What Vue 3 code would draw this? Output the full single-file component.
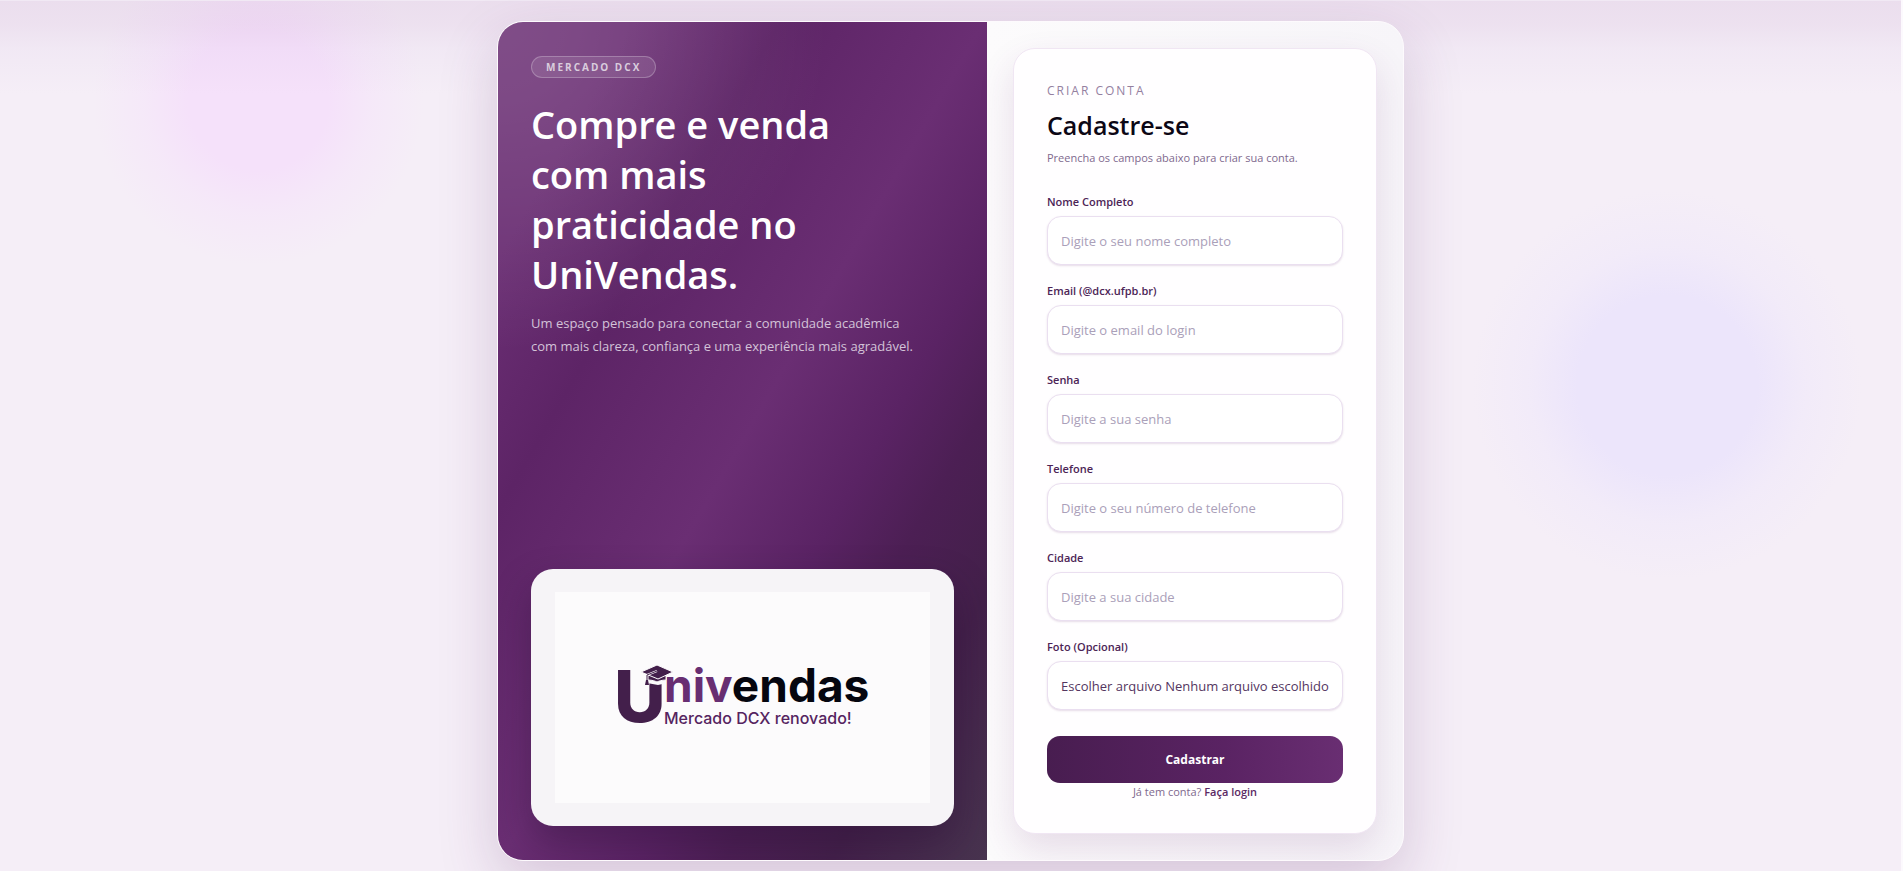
<script setup>
import { ref } from 'vue'

const fields = [
  { id: 'nome', label: 'Nome Completo', type: 'text', placeholder: 'Digite o seu nome completo' },
  { id: 'email', label: 'Email (@dcx.ufpb.br)', type: 'email', placeholder: 'Digite o email do login' },
  { id: 'senha', label: 'Senha', type: 'password', placeholder: 'Digite a sua senha' },
  { id: 'telefone', label: 'Telefone', type: 'tel', placeholder: 'Digite o seu número de telefone' },
  { id: 'cidade', label: 'Cidade', type: 'text', placeholder: 'Digite a sua cidade' },
]

const fileName = ref('Nenhum arquivo escolhido')

function onFile(event) {
  fileName.value = event.target.files[0]?.name ?? 'Nenhum arquivo escolhido'
}
</script>

<template>
  <main class="page">
    <div class="shell">
      <section class="hero">
        <div class="intro">
          <span class="badge">MERCADO DCX</span>
          <h1>Compre e venda com mais praticidade no UniVendas.</h1>
          <p>Um espaço pensado para conectar a comunidade acadêmica com mais clareza, confiança e uma experiência mais agradável.</p>
        </div>
        <div class="brand">
          <svg class="logo" viewBox="0 0 375 211" role="img" aria-label="Univendas">
            <rect width="375" height="211" fill="#fcfbfc" />
            <text class="initial" x="59" y="130" font-size="71" fill="#431f4b">U</text>
            <path d="M92 74h20v17l-9 2-11-2z" fill="#fcfbfc" />
            <text class="word" x="109" y="110" font-size="46" fill="#682e72">niv<tspan fill="#05060f">endas</tspan></text>
            <text class="tag" x="109" y="132" font-size="16" fill="#552460">Mercado DCX renovado!</text>
            <g fill="#431f4b" stroke="#fcfbfc" stroke-width="1">
              <path d="M93 82c5-2 13-2 18 0v6c-4 0-7 1-9 2-2-1-5-2-9-2z" />
              <path d="M86 80l16-7 16 7-15 7z" />
            </g>
            <path d="M102 79l-10 4v6" fill="none" stroke="#fcfbfc" stroke-width="2" />
            <path d="M102 79l-10 4v6" fill="none" stroke="#431f4b" stroke-width="1" />
            <path d="M91 88h2l1 5h-4z" fill="#431f4b" />
          </svg>
        </div>
      </section>

      <section class="side">
        <form class="card" @submit.prevent>
          <header>
            <span class="eyebrow">CRIAR CONTA</span>
            <h2>Cadastre-se</h2>
            <p>Preencha os campos abaixo para criar sua conta.</p>
          </header>
          <div class="fields">
            <div v-for="f in fields" :key="f.id" class="field">
              <label :for="f.id">{{ f.label }}</label>
              <input :id="f.id" class="control" :type="f.type" :placeholder="f.placeholder" />
            </div>
            <div class="field">
              <label for="foto">Foto (Opcional)</label>
              <div class="control file">
                <span>Escolher arquivo {{ fileName }}</span>
                <input id="foto" type="file" accept="image/*" @change="onFile" />
              </div>
            </div>
          </div>
          <button type="submit">Cadastrar</button>
          <p class="login">Já tem conta? <a href="#login">Faça login</a></p>
        </form>
      </section>
    </div>
  </main>
</template>

<style>
body {
  background: #f5eef7;
}
</style>

<style scoped>
* {
  box-sizing: border-box;
}
.page {
  min-height: 100vh;
  padding: 21px 24px 11px;
  border-right: 2px solid #fcf9fd;
  font-family: "Segoe UI", "Open Sans", "Noto Sans", sans-serif;
  background:
    linear-gradient(#f1e9f4 1px, transparent 1px),
    linear-gradient(rgba(190, 150, 195, 0.18) 0, rgba(190, 150, 195, 0.15) 24px, rgba(190, 160, 210, 0.07) 50px, rgba(190, 160, 210, 0) 94px),
    radial-gradient(circle at 13.6% 100px, rgb(245, 225, 250) 0, rgb(245, 225, 250) 70px, rgba(245, 227, 250, 0.5) 114px, rgba(244, 230, 250, 0) 165px),
    radial-gradient(circle at 87.7% 385px, rgb(236, 229, 251) 0, rgb(236, 229, 251) 90px, rgba(238, 231, 251, 0.45) 138px, rgba(240, 233, 251, 0) 195px),
    #f5eef7;
}
.shell {
  display: grid;
  grid-template-columns: 489fr 416fr;
  width: 100%;
  max-width: 907px;
  margin: 0 auto;
  overflow: hidden;
  border: 1px solid #fdfafd;
  border-radius: 26px;
  background: #fbfafc;
  box-shadow: 0 22px 60px rgba(90, 35, 99, 0.2);
}
.hero {
  display: flex;
  flex-direction: column;
  justify-content: space-between;
  padding: 34px 33px;
  color: #fff;
  background:
    radial-gradient(circle at 0 0, rgba(255, 255, 255, 0.15) 0, rgba(255, 255, 255, 0.13) 80px, rgba(255, 255, 255, 0) 330px),
    linear-gradient(120deg, #6a2e73 0%, #6a2e73 14%, #5d2466 29%, #6a2e73 50%, #5a2364 64%, #4c1f54 73%, #43204a 84%, #48344f 100%);
}
.badge {
  display: block;
  width: fit-content;
  padding: 0 14px;
  border: 1px solid rgba(255, 255, 255, 0.24);
  border-radius: 11px;
  background: rgba(255, 255, 255, 0.1);
  color: #d9cddd;
  font-size: 10px;
  font-weight: 700;
  line-height: 20px;
  letter-spacing: 2px;
}
h1 {
  max-width: 340px;
  margin: 21px 0 13px;
  font-size: 38px;
  font-weight: 600;
  line-height: 50px;
}
.intro p {
  max-width: 390px;
  margin: 0;
  color: #d3c3d8;
  font-size: 13px;
  line-height: 23px;
}
.brand {
  padding: 23px 24px;
  border-radius: 22px;
  background: #f6f4f7;
  box-shadow: 0 16px 36px rgba(40, 15, 50, 0.36);
}
.logo {
  display: block;
  width: 100%;
}
.initial,
.word {
  font-family: Inter, sans-serif;
  font-weight: 700;
}
.initial {
  font-weight: 800;
}
.tag {
  font-family: Inter, sans-serif;
  font-weight: 500;
}
.side {
  padding: 26px;
  background: linear-gradient(90deg, #fcfbfc, #f7f5f9);
}
.card {
  padding: 33px 33px 32px;
  border: 1px solid #f0e6f3;
  border-radius: 22px;
  background: #fffeff;
  box-shadow: 0 16px 36px rgba(105, 46, 114, 0.14);
}
.eyebrow {
  display: block;
  color: #94809f;
  font-size: 12px;
  font-weight: 500;
  line-height: 18px;
  letter-spacing: 2px;
}
h2 {
  margin: 0;
  color: #0c0715;
  font-size: 25px;
  font-weight: 600;
  line-height: 50px;
}
header p {
  margin: 0;
  color: #80698e;
  font-size: 11px;
  line-height: 16px;
}
.fields {
  display: grid;
  gap: 17px;
  margin-top: 27px;
}
.field {
  display: grid;
  gap: 5px;
}
label {
  color: #4c2456;
  font-size: 11px;
  font-weight: 600;
  line-height: 18px;
}
.control {
  width: 100%;
  height: 49px;
  padding: 0 13px;
  border: 1px solid #eadff0;
  border-radius: 14px;
  outline: 0;
  background: #fff;
  box-shadow: 0 1px 2px rgba(105, 46, 114, 0.16);
  color: #54365f;
  font-family: inherit;
  font-size: 13px;
}
.control::placeholder {
  color: #aaa0b9;
  opacity: 1;
}
.file {
  position: relative;
  display: flex;
  align-items: center;
  overflow: hidden;
  white-space: nowrap;
}
.file input {
  position: absolute;
  inset: 0;
  opacity: 0;
  cursor: pointer;
}
button {
  display: block;
  width: 100%;
  height: 47px;
  margin-top: 26px;
  border: 0;
  border-radius: 13px;
  background: linear-gradient(90deg, #481d50, #5a2363 60%, #692e72);
  color: #fff;
  font-family: inherit;
  font-size: 12px;
  font-weight: 700;
  cursor: pointer;
}
.login {
  margin: 0;
  color: #80698e;
  font-size: 11px;
  line-height: 18px;
  text-align: center;
}
.login a {
  color: #5b2964;
  font-weight: 600;
  text-decoration: none;
}
</style>
